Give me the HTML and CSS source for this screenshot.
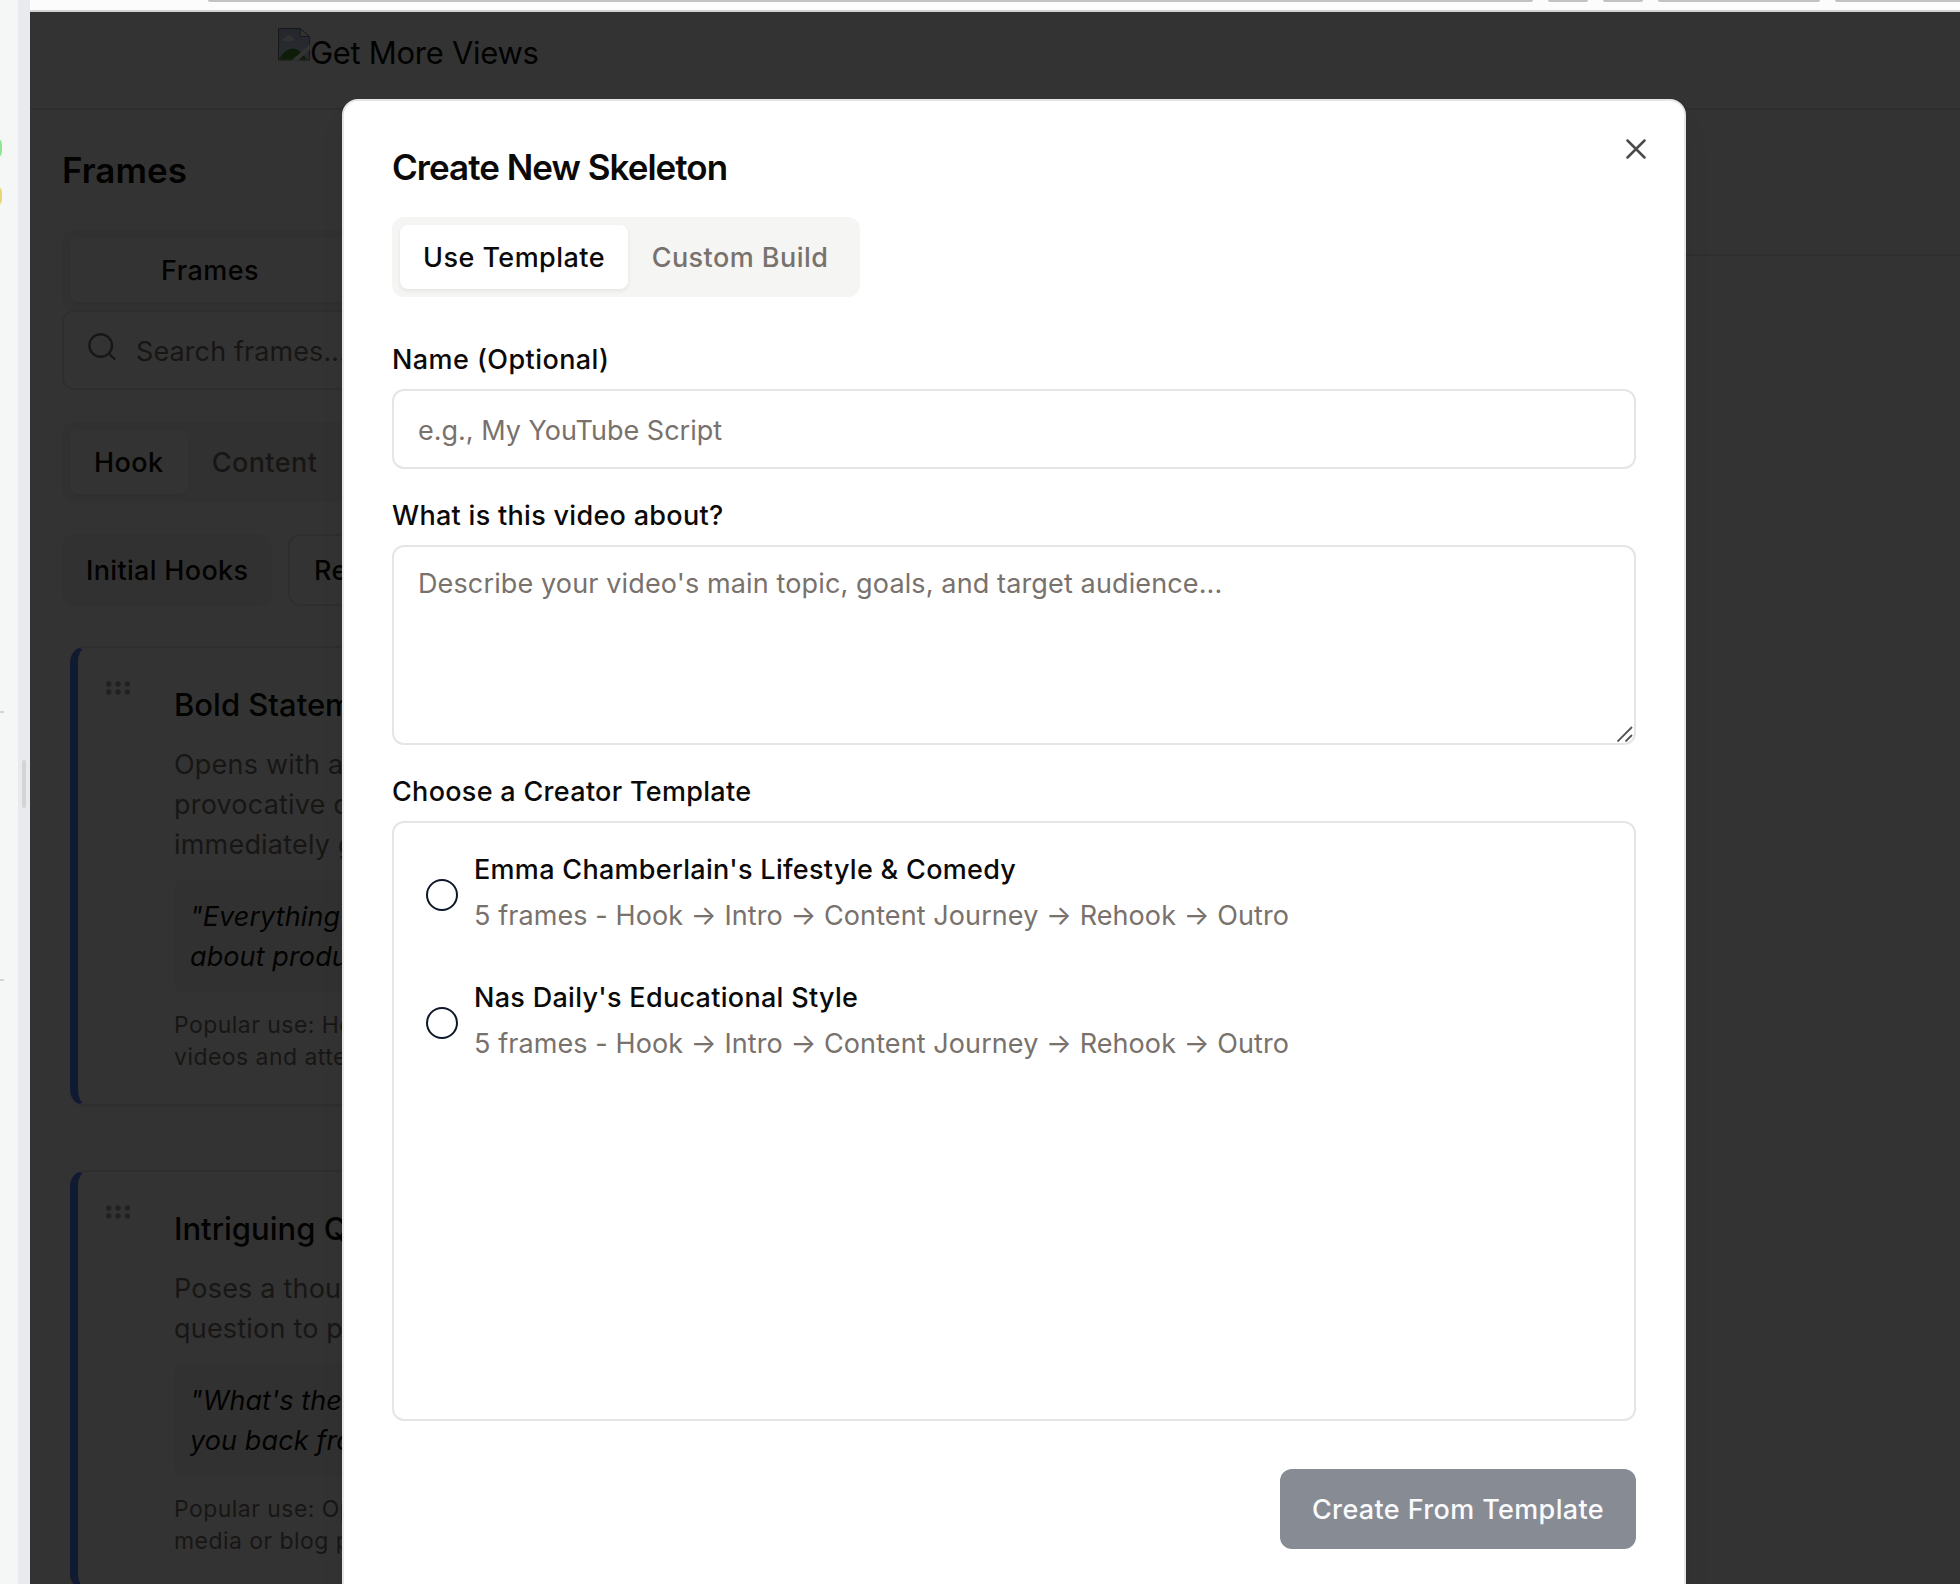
FILE: index.html
```html
<!DOCTYPE html>
<html lang="en">
<head>
<meta charset="utf-8">
<title>Get More Views</title>
<link rel="stylesheet" href="styles.css">
</head>
<body>
<aside class="rail">
  <span class="pill pill-green"></span>
  <span class="pill pill-yellow"></span>
  <span class="tick tick-one"></span>
  <span class="tick tick-two"></span>
  <div class="splitter"><span class="grip"></span></div>
</aside>
<div class="browser">
  <div class="toolbar">
    <span class="slot slot-url"></span><span class="slot slot-icon"></span><span class="slot slot-icon"></span><span class="slot slot-wide"></span><span class="slot slot-rest"></span>
  </div>
  <div class="viewport">
    <header class="site-header">
      <svg class="broken" width="32" height="33" viewBox="0 0 32 33">
        <defs><linearGradient id="sky" x1="0" y1="0" x2="0" y2="1"><stop offset="0" stop-color="#b4c0dc"/><stop offset="1" stop-color="#ccd8f4"/></linearGradient></defs>
        <path d="M0.500 0.500H22L31.500 9V32H0.500Z" fill="url(#sky)" stroke="#777"/>
        <path d="M4 13a3 3 0 0 1 3-3a4.500 4.500 0 0 1 8 0a2.500 2.500 0 0 1 1 3H4Z" fill="#f4f4f4"/>
        <path d="M1 31.500C5 24 10 20.500 15 20.500s9 4 14 11Z" fill="#479229"/>
        <path d="M13.500 32.500L32 16.500V21.500L20 32.500Z" fill="#fff"/>
        <path d="M22 0.500V8.500H31.500Z" fill="#fff" stroke="#777"/>
      </svg>
      <span class="brand">Get More Views</span>
    </header>
    <div class="workspace">
      <section class="sidebar">
        <h2 class="sidebar-title">Frames</h2>
        <div class="tabs tabs-full"><span class="tab tab-on">Frames</span><span class="tab"></span></div>
        <div class="search">
          <svg width="30" height="30" viewBox="0 0 30 30" fill="none" stroke="currentColor" stroke-width="2.400" stroke-linecap="round"><circle cx="13.700" cy="13.500" r="11.300"/><path d="M21.800 21.500L27.500 27"/></svg>
          <span>Search frames...</span>
        </div>
        <div class="tabs tabs-types"><span class="tab tab-on">Hook</span><span class="tab">Content</span></div>
        <div class="chips"><span class="chip chip-on">Initial Hooks</span><span class="chip">Rehooks</span></div>
        <article class="card">
          <svg class="handle" width="26" height="16" viewBox="0 0 26 16"><circle cx="2.700" cy="4" r="2.700"/><circle cx="12" cy="4" r="2.700"/><circle cx="21.400" cy="4" r="2.700"/><circle cx="2.700" cy="12" r="2.700"/><circle cx="12" cy="12" r="2.700"/><circle cx="21.400" cy="12" r="2.700"/></svg>
          <div class="card-body">
            <h3 class="card-title">Bold Statement</h3>
            <p class="card-text">Opens with a<br>provocative claim<br>immediately gets</p>
            <p class="quote">"Everything<br>about product</p>
            <p class="usage">Popular use: How-to<br>videos and attention</p>
          </div>
        </article>
        <article class="card">
          <svg class="handle" width="26" height="16" viewBox="0 0 26 16"><circle cx="2.700" cy="4" r="2.700"/><circle cx="12" cy="4" r="2.700"/><circle cx="21.400" cy="4" r="2.700"/><circle cx="2.700" cy="12" r="2.700"/><circle cx="12" cy="12" r="2.700"/><circle cx="21.400" cy="12" r="2.700"/></svg>
          <div class="card-body">
            <h3 class="card-title">Intriguing Question</h3>
            <p class="card-text">Poses a thought<br>question to pique</p>
            <p class="quote">"What's the one<br>you back from</p>
            <p class="usage">Popular use: Opening<br>media or blog posts</p>
          </div>
        </article>
      </section>
      <main class="canvas"><div class="canvas-bar"></div></main>
    </div>
    <div class="overlay"></div>
    <div class="dialog" role="dialog">
      <h1 class="dialog-title">Create New Skeleton</h1>
      <div class="tabs tabs-dialog"><span class="tab tab-on">Use Template</span><span class="tab">Custom Build</span></div>
      <div class="fields">
        <div class="field">
          <label class="label" for="name">Name (Optional)</label>
          <input class="input" id="name" placeholder="e.g., My YouTube Script">
        </div>
        <div class="field">
          <label class="label" for="about">What is this video about?</label>
          <div class="textarea-wrap">
            <textarea class="input textarea" id="about" placeholder="Describe your video's main topic, goals, and target audience..."></textarea>
            <svg class="resizer" width="16" height="16" viewBox="0 0 16 16" fill="none" stroke="#555" stroke-width="1.900"><path d="M0.500 15.500L15 1M8.500 15.500L15 9"/></svg>
          </div>
        </div>
        <div class="field">
          <span class="label">Choose a Creator Template</span>
          <div class="options">
            <div class="option">
              <span class="radio"></span>
              <div class="option-text"><span class="option-name">Emma Chamberlain's Lifestyle &amp; Comedy</span><span class="option-flow">5 frames - Hook → Intro → Content Journey → Rehook → Outro</span></div>
            </div>
            <div class="option">
              <span class="radio"></span>
              <div class="option-text"><span class="option-name">Nas Daily's Educational Style</span><span class="option-flow">5 frames - Hook → Intro → Content Journey → Rehook → Outro</span></div>
            </div>
          </div>
        </div>
      </div>
      <button class="submit" type="button">Create From Template</button>
      <svg class="close" width="20" height="20" viewBox="0 0 20 20" stroke="#4b4b4b" stroke-width="2.500" stroke-linecap="round"><path d="M1.500 1.500L18.500 18.500M18.500 1.500L1.500 18.500"/></svg>
    </div>
  </div>
</div>
</body>
</html>
```
FILE: styles.css
```css
* { box-sizing: border-box; }
body {
  margin: 0;
  width: 1960px;
  height: 1584px;
  overflow: hidden;
  display: flex;
  font: 400 27px/40px Inter, "Liberation Sans", sans-serif;
  letter-spacing: 0.1px;
  color: #0c0a09;
  background: #fff;
}
h1, h2, h3, p { margin: 0; }

/* Left edge of the neighbouring pane */
.rail { position: relative; width: 30px; flex: none; background: #f5f7f6; display: flex; justify-content: flex-end; }
.splitter { width: 12px; background: #e9eaed; display: flex; justify-content: center; align-items: center; padding-bottom: 16px; }
.grip { width: 4px; height: 48px; border-radius: 2px; background: #d3d4d6; }
.pill { position: absolute; left: -18px; width: 20px; height: 20px; border-radius: 6px; }
.pill-green { top: 138px; background: #90e591; }
.pill-yellow { top: 186px; background: #e8d776; }
.tick { position: absolute; left: 0; width: 4px; height: 2px; background: #d3d5d5; }
.tick-one { top: 711px; }
.tick-two { top: 979px; }

.browser { flex: 1; display: flex; flex-direction: column; min-width: 0; }
.toolbar { height: 12px; flex: none; background: #fcfcfc; border-bottom: 2px solid #d2d3d4; padding-left: 178px; display: flex; gap: 15px; overflow: hidden; }
.slot { height: 2px; flex: none; background: #c2c2c2; border-radius: 0 0 6px 6px; }
.slot-url { width: 1325px; }
.slot-icon { width: 40px; }
.slot-wide { width: 162px; }
.slot-rest { width: 200px; }
.viewport { flex: 1; min-height: 0; position: relative; overflow: hidden; display: flex; flex-direction: column; background: #fff; }

.site-header { height: 98px; flex: none; border-bottom: 2px solid #e5e5e5; padding: 16px 0 0 248px; display: flex; }
.brand { font-size: 31px; line-height: 49px; letter-spacing: -0.3px; }
.workspace { flex: 1; display: flex; min-height: 0; }

.sidebar { width: 640px; flex: none; padding: 32px; overflow: hidden; white-space: nowrap; }
.sidebar-title { font-size: 35px; line-height: 56px; font-weight: 600; letter-spacing: 0; margin-bottom: 32px; }
.tabs { height: 80px; border-radius: 12px; background: #f5f5f4; padding: 8px; display: flex; }
.tab { display: flex; align-items: center; justify-content: center; padding-top: 2px; font-weight: 500; letter-spacing: 0.45px; color: #78716c; border-radius: 8px; }
.tab-on { background: #fff; color: #0c0a09; box-shadow: 0 2px 4px rgba(0, 0, 0, .07); }
.tabs-full .tab { flex: 1; }
.tabs-types { margin: 32px 0; }
.tabs-types .tab { padding: 2px 24px 0; }
.search { height: 80px; border: 2px solid #e5e5e5; border-radius: 12px; display: flex; align-items: center; gap: 19px; padding: 4px 0 0 23px; color: #78716c; }
.search svg { margin-top: -11px; }
.chips { display: flex; gap: 16px; height: 72px; margin-bottom: 40px; }
.chip { display: flex; align-items: center; padding: 2px 24px 0; border-radius: 12px; border: 2px solid #e5e5e5; font-weight: 500; letter-spacing: 0.33px; }
.chip-on { background: #f5f5f4; border-color: transparent; padding: 2px 22px 0; width: 210px; }

.card { margin: 0 0 64px 8px; border: 2px solid #e5e5e5; border-left: 8px solid #4f80f5; border-radius: 16px; padding: 32px 32px 32px 28px; display: flex; gap: 42px; box-shadow: 0 2px 4px rgba(0, 0, 0, .06); }
.handle { flex: none; fill: #9ca3af; }
.card-body { flex: 1; padding-top: 3px; }
.card-title { font-size: 31px; line-height: 44px; font-weight: 500; letter-spacing: 0; margin-bottom: 18px; }
.card-text { color: #78716c; letter-spacing: 0.2px; margin-bottom: 15px; }
.quote { background: #f5f5f4; border-radius: 8px; padding: 17px 16px 15px; font-style: italic; letter-spacing: 0.1px; margin-bottom: 17px; }
.usage { font-size: 23px; line-height: 32px; letter-spacing: 0.45px; color: #78716c; margin-bottom: -1px; }

.canvas { flex: 1; }
.canvas-bar { height: 146px; border-bottom: 2px solid #e5e5e5; }

.overlay { position: absolute; inset: 0; background: rgba(0, 0, 0, .8); }
.dialog { position: absolute; left: 312px; top: 87px; width: 1344px; height: 1520px; background: #fff; border: 2px solid #e5e5e5; border-radius: 16px; padding: 48px; display: flex; flex-direction: column; box-shadow: 0 20px 30px -6px rgba(0, 0, 0, .1); }
.dialog-title { font-size: 35px; line-height: 36px; font-weight: 600; letter-spacing: -0.98px; margin-bottom: 32px; }
.tabs-dialog { width: 468px; margin-bottom: 48px; }
.tabs-dialog .tab { width: 228px; }
.tabs-dialog .tab:last-child { width: 224px; }
.fields { display: flex; flex-direction: column; gap: 32px; margin-bottom: 48px; }
.field { display: flex; flex-direction: column; gap: 16px; }
.label { height: 28px; line-height: 30px; font-weight: 500; letter-spacing: 0.3px; }
.label[for="name"] { letter-spacing: 0.43px; }
.input { display: block; width: 100%; height: 80px; border: 2px solid #e5e5e5; border-radius: 12px; background: #fff; padding: 2px 24px 0; font: inherit; letter-spacing: 0; color: inherit; outline: none; }
.input::placeholder { color: #78716c; opacity: 1; }
.textarea-wrap { position: relative; }
.textarea { height: 200px; padding: 17px 24px 15px; letter-spacing: 0.13px; resize: none; }
.resizer { position: absolute; right: 3px; bottom: 3px; }
.options { height: 600px; border: 2px solid #e5e5e5; border-radius: 12px; padding: 8px 32px; }
.option { height: 128px; display: flex; align-items: center; gap: 16px; }
.radio { width: 32px; height: 32px; flex: none; border: 2px solid #0f172a; border-radius: 50%; }
.option-text { display: flex; flex-direction: column; line-height: 46px; padding-bottom: 4px; }
.option-name { font-weight: 500; letter-spacing: 0.3px; }
.option-flow { color: #78716c; letter-spacing: 0.09px; }
.submit { align-self: flex-end; width: 356px; height: 80px; padding: 2px 0 0; border: 0; border-radius: 12px; background: #878b94; color: #f9fafb; font: inherit; font-weight: 500; letter-spacing: 0.37px; }
.close { position: absolute; right: 38px; top: 38px; }
```
